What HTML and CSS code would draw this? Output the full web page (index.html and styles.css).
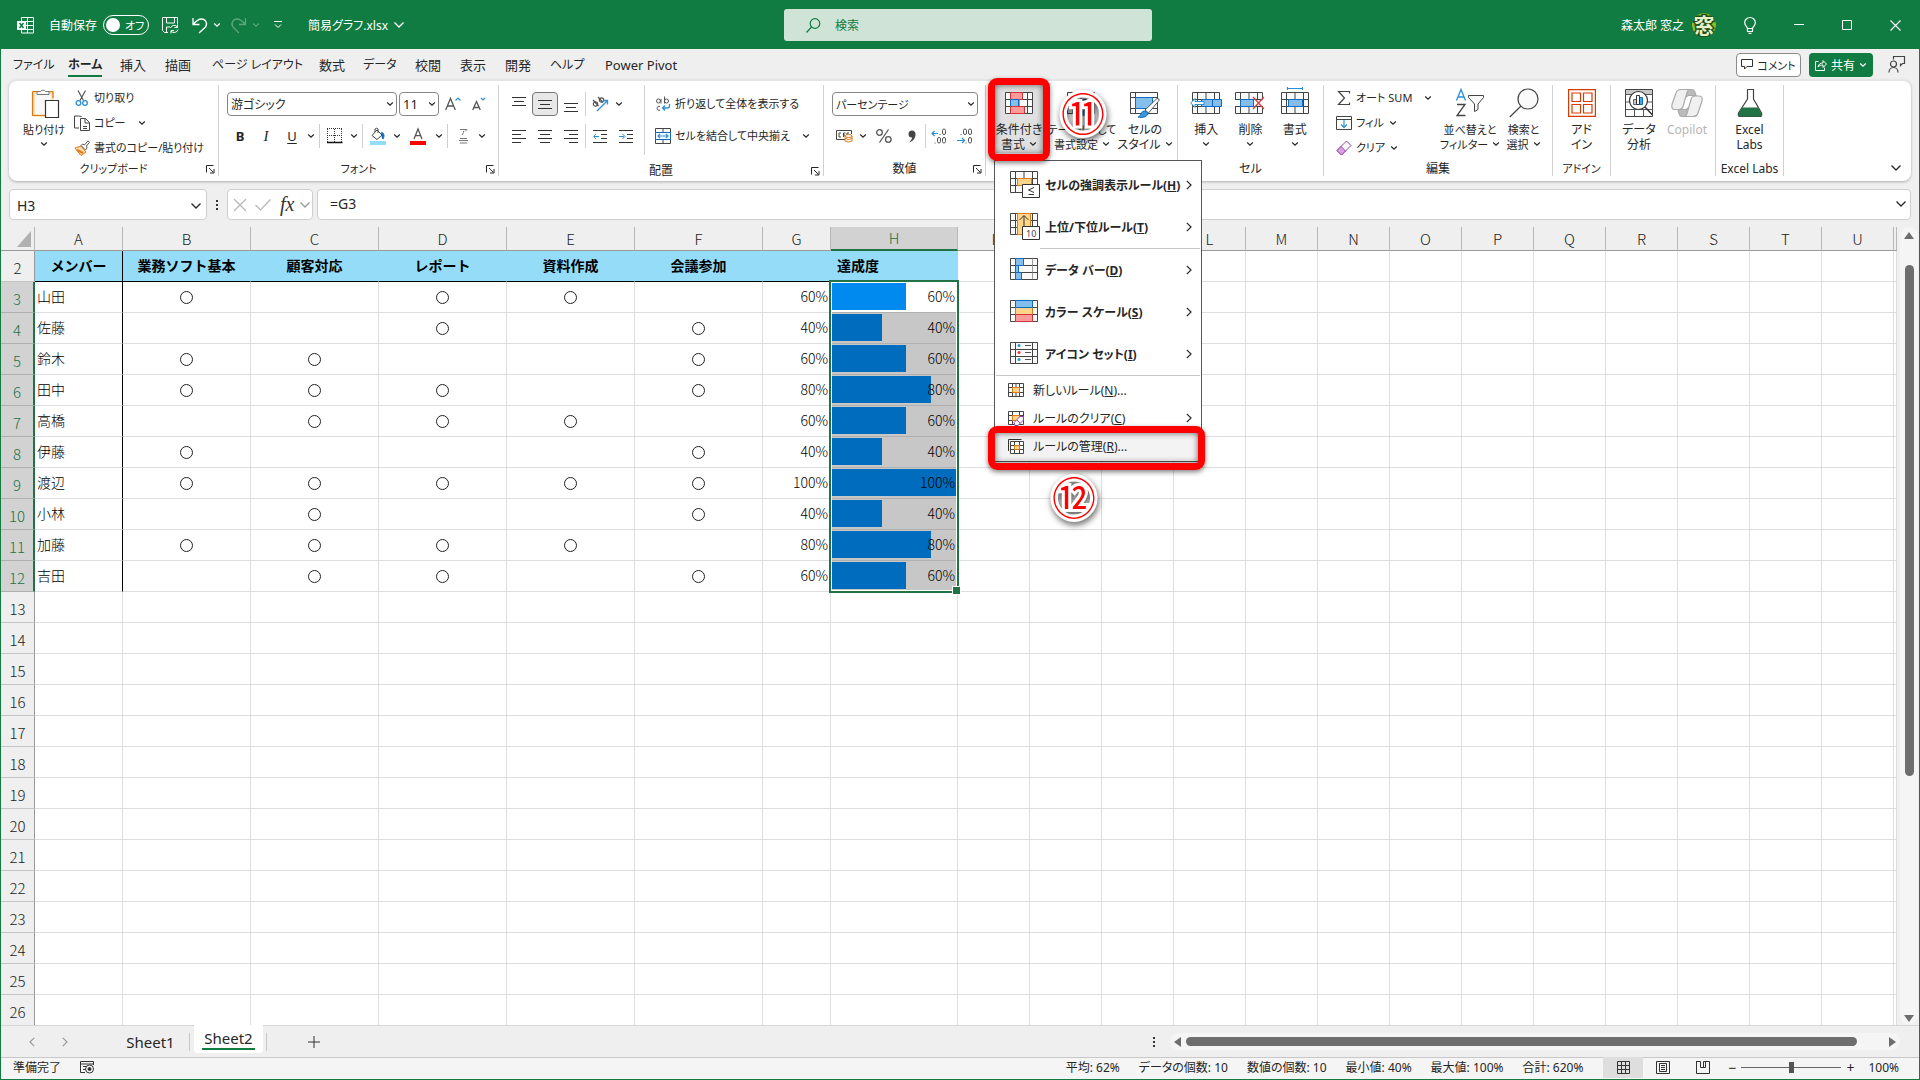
FILE: index.html
```html
<!DOCTYPE html>
<html lang="ja">
<head>
<meta charset="utf-8">
<title>簡易グラフ.xlsx - Excel</title>
<link rel="stylesheet" href="styles.css">
</head>
<body>
<svg class="defs" aria-hidden="true">
  <symbol id="chev" viewBox="0 0 8 6"><path d="M1.2 1.5 4 4.2 6.8 1.5" fill="none" stroke="currentColor" stroke-width="1.2"/></symbol>
  <symbol id="chev-l" viewBox="0 0 12 8"><path d="M1.5 1.5 6 6l4.500-4.500" fill="none" stroke="currentColor" stroke-width="1.300"/></symbol>
  <symbol id="next" viewBox="0 0 6 10"><path d="M.8.8 5 5 .8 9.200" fill="none" stroke="currentColor" stroke-width="1.200"/></symbol>
  <symbol id="launch" viewBox="0 0 9 9"><path d="M.5 7.500v-7h7M3 3l4.500 4.500M8 4v4H4" fill="none" stroke="currentColor"/></symbol>
  <symbol id="grid" viewBox="0 0 28 22"><path d="M.5.5h27v21H.5zM5.500.5v21M22.500.5v21M.5 7.500h27M.5 14.500h27M14 .5v21" fill="#fafafa" stroke="#444"/></symbol>
</svg>

<div class="app">
  <header class="title">
    <div class="title-left">
      <svg class="logo" viewBox="0 0 17 17"><path d="M4.500.5h12v15.500h-12zM4.500 4.500h12M4.500 8.500h12M4.500 12.500h12M10.500.5V16" fill="none" stroke="#fff"/><path d="M0 4h9v9H0z" fill="#fff"/><path d="M2.500 6l4 5M6.500 6l-4 5" stroke="#107c41" stroke-width="1.500"/></svg>
      <label class="autosave"><span>自動保存</span><input type="checkbox" class="toggle-input"><span class="toggle"><i class="knob"></i>オフ</span></label>
      <button class="tb save" aria-label="保存"><svg width="17" height="17" viewBox="0 0 17 17" fill="none" stroke="#fff"><path d="M6 15.500H2.500L.5 13.500V.5h15V7M4.500.5V6h8V.5M4.500 15v-5H8"/><path d="M8.500 11a4 4 0 0 1 7-1M15.500 7.500V10.500h-3M16 12.500a4 4 0 0 1-7 1.500M9 16.500v-3h3"/></svg></button>
      <button class="tb undo" aria-label="元に戻す"><svg width="16" height="17" viewBox="0 0 16 17" fill="none" stroke="#fff" stroke-width="1.300"><path d="M1 1v6.500h6.500M1 7.500C4 4 6 2 9.500 2a5 5 0 0 1 4 8L7 16"/></svg><svg class="chev"><use href="#chev"/></svg></button>
      <button class="tb redo" aria-label="やり直し"><svg width="16" height="17" viewBox="0 0 16 17" fill="none" stroke="currentColor" stroke-width="1.300"><path d="M14.500 1v6.500H8M14.500 7.500C11.500 4 9.500 2 6 2a5 5 0 0 0-4 8l6 6"/></svg><svg class="chev"><use href="#chev"/></svg></button>
      <button class="tb qat" aria-label="カスタマイズ"><svg width="8" height="8" viewBox="0 0 8 8" fill="none" stroke="#fff"><path d="M0 .5h8M1 3.500l3 3 3-3"/></svg></button>
      <button class="tb fname">簡易グラフ.xlsx<svg class="chev-l"><use href="#chev-l"/></svg></button>
    </div>
    <label class="search"><svg width="15" height="15" viewBox="0 0 15 15" fill="none" stroke="#107c41" stroke-width="1.200"><circle cx="9" cy="5.500" r="4.800"/><path d="M5.500 9 .5 14.500"/></svg><input type="search" placeholder="検索" aria-label="検索"></label>
    <div class="title-right">
      <span>森太郎 窓之</span>
      <svg class="avatar" viewBox="0 0 24 24"><circle cx="12" cy="12" r="12" fill="#8fbf21"/><path d="M2 19a12 12 0 0 0 20 0l-3-3H5z" fill="#1f4d1a"/><text x="12" y="20" text-anchor="middle" class="seal">窓</text></svg>
      <button class="tb bulb" aria-label="ヒント"><svg width="12" height="17" viewBox="0 0 12 17" fill="none" stroke="#fff" stroke-width="1.200"><path d="M3.500 11.500C3 9.500.7 8.500.7 5.500a5.300 5 0 0 1 10.600 0c0 3-2.300 4-2.800 6zM3.500 11.500v3h5v-3M4.500 16.300h3"/></svg></button>
      <button class="win" aria-label="最小化"><svg width="10" height="10"><path d="M0 4.500h10" stroke="#fff"/></svg></button>
      <button class="win" aria-label="最大化"><svg width="10" height="10"><path d="M.5.5h9v9h-9z" fill="none" stroke="#fff"/></svg></button>
      <button class="win" aria-label="閉じる"><svg width="11" height="11"><path d="M.5.5l10 10M10.500.5l-10 10" stroke="#fff" stroke-width="1.200"/></svg></button>
    </div>
  </header>

  <nav class="tabs">
    <div class="tab-list">
      <button class="kana">ファイル</button><button class="kana on">ホーム</button><button>挿入</button><button>描画</button><button class="kana">ページ レイアウト</button><button>数式</button><button class="kana">データ</button><button>校閲</button><button>表示</button><button>開発</button><button class="kana">ヘルプ</button><button>Power Pivot</button>
    </div>
    <button class="pill comment"><svg width="12" height="11" viewBox="0 0 12 11"><path d="M.5.5h11v7H6l-2.500 2.500V7.500h-3z" fill="none" stroke="#333"/></svg>コメント</button>
    <button class="pill share"><svg width="12" height="12" viewBox="0 0 12 12"><path d="M3.500 2.500h-3v9h9v-3M3 8c.5-3 2.500-4 5-4V1.500L11.500 5 8 8.500V6C6 6 4.500 6.500 3 8z" fill="none" stroke="#fff"/></svg>共有<svg class="chev"><use href="#chev"/></svg></button>
    <button class="pill person" aria-label="キャッチアップ"><svg width="17" height="17" viewBox="0 0 17 17"><path d="M5.500 3.500v-3h11v7h-2l-2 2v-2M1 16.500c0-3 2-5 4.500-5s4.500 2 4.500 5" fill="none" stroke="#444" stroke-width="1.200"/><circle cx="5.500" cy="8" r="3" fill="none" stroke="#444" stroke-width="1.200"/></svg></button>
  </nav>

  <section class="ribbon">
    <div class="group g-clip">
      <div class="body">
        <button class="big paste"><svg width="28" height="30" viewBox="0 0 28 30"><path d="M1.500 4.500h19v23h-19z" fill="#f8f8f8" stroke="#fbd78a" stroke-width="2"/><path d="M.5 3.500h20.500V10M.5 3.500v24H13" fill="none" stroke="#e07a14" stroke-width="1.200"/><path d="M5 6.500v-3h3.500a3 3 0 0 1 5 0H17v3z" fill="#fff" stroke="#777"/><path d="M13.500 12.500h13v17h-13z" fill="#fff" stroke="#333" stroke-width="1.200"/></svg><span>貼り付け</span><svg class="chev"><use href="#chev"/></svg></button>
        <div class="stack">
          <button class="small"><svg class="ic" viewBox="0 0 16 16" fill="none"><path d="M4 .5l5.500 10M11.500.5 6 10.500" stroke="#555" stroke-width="1.200"/><circle cx="4.500" cy="13" r="2.300" stroke="#2b8fd6" stroke-width="1.300"/><circle cx="11" cy="13" r="2.300" stroke="#2b8fd6" stroke-width="1.300"/></svg>切り取り</button>
          <button class="small"><svg class="ic" viewBox="0 0 16 16"><path d="M5 13H.5V1h4l3 .5M6.500 3.500h5l4 4v8h-9zM11 3.500V8h4.500M9 11.500h4M9 13.500h4" fill="none" stroke="#444"/></svg>コピー<svg class="chev far"><use href="#chev"/></svg></button>
          <button class="small"><svg class="ic" viewBox="0 0 16 16"><path d="M1 8l6-2 5 6-5 3.500z" fill="#fbdcae" stroke="#e07a14"/><path d="M3 10l6 3" stroke="#e07a14" stroke-width="2"/><path d="M7 5.500 8.500 4 10.500 5 14 .8l1.500 1.500L12.500 6l.5 2-1.500 2z" fill="#fff" stroke="#555"/></svg>書式のコピー/貼り付け</button>
        </div>
      </div>
      <div class="foot kana">クリップボード<button class="launch" aria-label="詳細"><svg width="9" height="9"><use href="#launch"/></svg></button></div>
    </div>

    <div class="group g-font">
      <div class="rows">
        <div class="row">
          <label class="combo font-name"><select aria-label="フォント"><option>游ゴシック</option></select><svg class="chev"><use href="#chev"/></svg></label>
          <label class="combo font-size"><select aria-label="サイズ"><option>11</option></select><svg class="chev"><use href="#chev"/></svg></label>
          <button class="ib w26" aria-label="拡大"><svg width="16" height="14" viewBox="0 0 16 14" fill="none"><path d="M.7 13 5.500 1.500 10.300 13M2.300 9h6.500" stroke="#555" stroke-width="1.300"/><path d="M10.500 3.500 13 1l2.500 2.500" stroke="#2b8fd6" stroke-width="1.200"/></svg></button>
          <button class="ib w26" aria-label="縮小"><svg width="14" height="14" viewBox="0 0 14 14" fill="none"><path d="M.7 13 4.500 4.500 8.300 13M2 10.500h5" stroke="#555" stroke-width="1.300"/><path d="M9 1l2 2 2-2" stroke="#2b8fd6" stroke-width="1.200"/></svg></button>
        </div>
        <div class="row">
          <button class="ib w26 bold">B</button><button class="ib w26 ital">I</button><button class="ib w26 undl">U</button><button class="ib w12" aria-label="下線の種類"><svg class="chev"><use href="#chev"/></svg></button><i class="vs"></i>
          <button class="ib w26" aria-label="罫線"><svg width="16" height="16"><path d="M.5 1v13M7.500 1v13M14.500 1v13M0 .5h16M0 7.500h16" stroke="#333" stroke-dasharray="1 1"/><path d="M0 14.500h15.500" stroke="#111" stroke-width="1.500"/></svg></button><button class="ib w12" aria-label="罫線の種類"><svg class="chev"><use href="#chev"/></svg></button><i class="vs"></i>
          <button class="ib w26" aria-label="塗りつぶし"><svg width="16" height="17" viewBox="0 0 16 17"><path d="M2 7.500 7 2l5 5-5 4.500zM5 4V1q1.500-1.500 3 0v4" fill="#fff" stroke="#444"/><path d="M11.500 4.500c3 .5 3 4 1.500 6.500-1-1.500-1-3-1.500-6.500z" fill="#0f6cbd" stroke="#0f6cbd"/><path d="M0 13h16v4H0z" fill="#93ddf8"/></svg></button><button class="ib w12" aria-label="塗りつぶしの色"><svg class="chev"><use href="#chev"/></svg></button>
          <button class="ib w30" aria-label="フォントの色"><svg width="16" height="17" viewBox="0 0 16 17"><path d="M4 11 8 1l4 10M5.300 7.700h5.400" fill="none" stroke="#555" stroke-width="1.300"/><path d="M0 13h16v4H0z" fill="red"/></svg></button><button class="ib w12" aria-label="色の選択"><svg class="chev"><use href="#chev"/></svg></button><i class="vs"></i>
          <button class="ib w26" aria-label="ふりがな"><svg width="9" height="16" viewBox="0 0 9 16" fill="none" stroke="#777"><path d="M1 1.500h7L6 3.500M4.500 3v1.500L3 7M1 10.500h7M0 12.500h9M1 15h7"/></svg></button><button class="ib w12" aria-label="ふりがなの設定"><svg class="chev"><use href="#chev"/></svg></button>
        </div>
      </div>
      <div class="foot kana">フォント<button class="launch" aria-label="詳細"><svg width="9" height="9"><use href="#launch"/></svg></button></div>
    </div>

    <div class="group g-align">
      <div class="split">
        <div class="rows">
          <div class="row">
            <button class="ib w26" aria-label="上揃え"><svg class="al"><path d="M0 1.500h14M2 5.500h10M0 9.500h14"/></svg></button><button class="ib w26 sel" aria-label="上下中央"><svg class="al"><path d="M0 4.500h14M2 8.500h10M0 12.500h14"/></svg></button><button class="ib w26" aria-label="下揃え"><svg class="al"><path d="M0 7.500h14M2 11.500h10M0 15.500h14"/></svg></button><i class="vs"></i>
            <button class="ib w26" aria-label="方向"><svg width="17" height="16" viewBox="0 0 17 16"><g fill="none"><circle cx="3.500" cy="8" r="2.200" stroke="#555" stroke-width="1.200"/><path d="M1 4l5.500 6M6 1l5 5.500" stroke="#555" stroke-width="1.200"/><circle cx="9.500" cy="4" r="2.200" stroke="#555" stroke-width="1.200"/><path d="M5 15 15.500 4.500M11.500 4.500h4v4" stroke="#2b8fd6" stroke-width="1.300"/></g></svg></button><button class="ib w12" aria-label="方向の選択"><svg class="chev"><use href="#chev"/></svg></button>
          </div>
          <div class="row">
            <button class="ib w26" aria-label="左揃え"><svg class="al"><path d="M0 2.500h14M0 6.500h9M0 10.500h14M0 14.500h9"/></svg></button><button class="ib w26" aria-label="中央揃え"><svg class="al"><path d="M0 2.500h14M2 6.500h10M0 10.500h14M2 14.500h10"/></svg></button><button class="ib w26" aria-label="右揃え"><svg class="al"><path d="M0 2.500h14M5 6.500h9M0 10.500h14M5 14.500h9"/></svg></button><i class="vs"></i>
            <button class="ib w26" aria-label="インデントを減らす"><svg class="al"><path d="M0 2.500h14M8 6.500h6M8 10.500h6M0 14.500h14"/><path class="bl" d="M6 8.500H1M3 6 .7 8.500 3 11"/></svg></button><button class="ib w26" aria-label="インデントを増やす"><svg class="al"><path d="M0 2.500h14M8 6.500h6M8 10.500h6M0 14.500h14"/><path class="bl" d="M0 8.500h5M3.500 6 6 8.500 3.500 11"/></svg></button>
          </div>
        </div>
        <div class="rows wrapcol">
          <button class="small"><svg class="ic" viewBox="0 0 16 16" fill="none" stroke="#555"><circle cx="3.500" cy="5" r="2"/><path d="M6 3v4.500M9.500.5v7"/><circle cx="11.500" cy="5" r="2"/><path d="M5 10.500a2 2 0 1 0 0 3.500"/><path d="M14.500 8v2q0 2-2.500 2H7.500M10 9.500 7.500 12l2.500 2.500" stroke="#2b8fd6" stroke-width="1.300"/></svg>折り返して全体を表示する</button>
          <button class="small"><svg class="ic" viewBox="0 0 16 16" fill="none"><path d="M.5.5h15v15H.5zM8 .5v4M8 12v3.500" stroke="#444"/><path d="M.5 4.500h15v7H.5z" fill="#fff" stroke="#0f6cbd"/><path d="M3 8h10M5 6 3 8l2 2M11 6l2 2-2 2" stroke="#2b8fd6" stroke-width="1.200"/></svg>セルを結合して中央揃え<svg class="chev far"><use href="#chev"/></svg></button>
        </div>
      </div>
      <div class="foot">配置<button class="launch" aria-label="詳細"><svg width="9" height="9"><use href="#launch"/></svg></button></div>
    </div>

    <div class="group g-num">
      <div class="rows">
        <div class="row"><label class="combo num-fmt"><select aria-label="表示形式" class="kana"><option>パーセンテージ</option></select><svg class="chev"><use href="#chev"/></svg></label></div>
        <div class="row">
          <button class="ib w26" aria-label="通貨"><svg width="17" height="14" viewBox="0 0 17 14"><path d="M9 10.500H.5V1.500h15V5M5 4H3v4h2M7.500 8V4h2M7.500 6H9M13 4h-2v2" fill="none" stroke="#444"/><path d="M9 7v5q3.500 2 7 0V7z" fill="#fff" stroke="#e07a14"/><ellipse cx="12.500" cy="7" rx="3.500" ry="1.500" fill="#fff" stroke="#e07a14"/><path d="M9 9.500q3.500 2 7 0" fill="none" stroke="#e07a14"/></svg></button><button class="ib w12" aria-label="通貨の種類"><svg class="chev"><use href="#chev"/></svg></button>
          <button class="ib w30" aria-label="パーセント"><svg width="16" height="14" viewBox="0 0 16 14" fill="none" stroke="#555" stroke-width="1.300"><circle cx="3.500" cy="3.500" r="2.800"/><circle cx="12.300" cy="10.500" r="2.800"/><path d="M12.500.5 3.500 13.500"/></svg></button><button class="ib w26" aria-label="桁区切り"><svg width="8" height="13" viewBox="0 0 8 13"><path d="M4 .5a3.500 3.500 0 0 1 3.500 4C7.500 8 5 11.500 1 12.500c2-2 3-3.500 3-5A3.500 3.500 0 1 1 4 .5z" fill="#444"/></svg></button><i class="vs"></i>
          <button class="ib w26" aria-label="小数点以下を増やす"><svg width="16" height="16" viewBox="0 0 16 16" fill="none" stroke="#555"><path d="M7 5.500H1M3.500 3 1 5.500 3.500 8" stroke="#2b8fd6" stroke-width="1.200"/><rect x="11.500" y="1" width="3" height="5.500" rx="1.500"/><rect x="6.500" y="9.500" width="3" height="5.500" rx="1.500"/><rect x="11.500" y="9.500" width="3" height="5.500" rx="1.500"/><path d="M8.500 6.500h1M3.500 15h1"/></svg></button><button class="ib w26" aria-label="小数点以下を減らす"><svg width="16" height="16" viewBox="0 0 16 16" fill="none" stroke="#555"><path d="M0 12.500h7M5 10l2.500 2.500L5 15" stroke="#2b8fd6" stroke-width="1.200"/><rect x="6.500" y="1" width="3" height="5.500" rx="1.500"/><rect x="11.500" y="1" width="3" height="5.500" rx="1.500"/><rect x="11.500" y="9.500" width="3" height="5.500" rx="1.500"/><path d="M3.500 6.500h1M8.500 15h1"/></svg></button>
        </div>
      </div>
      <div class="foot">数値<button class="launch" aria-label="詳細"><svg width="9" height="9"><use href="#launch"/></svg></button></div>
    </div>

    <div class="group g-style">
      <div class="body">
        <button class="big pressed"><svg width="28" height="30" viewBox="0 0 28 30"><svg y="4" width="28" height="22"><use href="#grid"/></svg><path d="M5.500 4.500h12v7h-12z" fill="#ff9a9a" stroke="#d13438"/><path d="M5.500 11.500h8v7h-8z" fill="#83beec" stroke="#0f6cbd"/><path d="M5.500 18.500h14v7h-14z" fill="#ff9a9a" stroke="#d13438"/></svg><span>条件付き<br>書式<svg class="chev"><use href="#chev"/></svg></span>
          <i class="mark mark-btn"></i></button>
        <button class="big"><svg width="30" height="30" viewBox="0 0 30 30"><svg y="4" width="28" height="22"><use href="#grid"/></svg><path d="M6 12h16v13H6z" fill="#83beec" stroke="#0f6cbd"/><path d="M12 27c0-4 2-6 5-6l3 3c0 3-4 4-8 3z" fill="#2b8fd6" stroke="#0f6cbd"/></svg><span>テーブルとして<br>書式設定<svg class="chev"><use href="#chev"/></svg></span></button>
        <button class="big"><svg width="30" height="30" viewBox="0 0 30 30"><path d="M.5 4.500h27v21H.5zM5.500 4.500v21M.5 9.500h27M.5 20.500h27" fill="#fafafa" stroke="#444"/><path d="M5.500 9.500h17v11h-17z" fill="#83beec" stroke="#0f6cbd"/><path d="M15 22 27 10.500q3 0 2 2L18.500 25z" fill="#fff" stroke="#555"/><path d="M8 29c3 0 2-5 6-6 3 0 4 2 4 3-1 3-6 4-10 3z" fill="#3a96dd" stroke="#0f6cbd"/></svg><span>セルの<br>スタイル<svg class="chev"><use href="#chev"/></svg></span></button>
      </div>
      <span class="badge badge-11">⑪</span>
      <div class="menu" role="menu">
        <button class="mi lg"><svg width="30" height="28" viewBox="0 0 30 28"><use href="#grid" width="28" height="22"/><path d="M7.500 7.500h14v7h-14z" fill="#ffd58a" stroke="#e07a14"/><path d="M12.500 13.500h17v13h-17z" fill="#fff" stroke="#333"/><path d="M24 16.500 18.500 19l5.500 2.500M18.500 23.500H24" fill="none" stroke="#333"/></svg><b>セルの強調表示ルール(<u>H</u>)</b><svg class="next"><use href="#next"/></svg></button>
        <button class="mi lg"><svg width="30" height="28" viewBox="0 0 30 28"><use href="#grid" width="28" height="22"/><path d="M7.500.5h13v21h-13z" fill="#ffd58a" stroke="#e07a14"/><path d="M14 15V3M9.500 7 14 2.500 18.500 7" fill="none" stroke="#333"/><path d="M12.500 13.500h17v13h-17z" fill="#fff" stroke="#333"/><text x="16" y="24" class="tiny">10</text></svg><b>上位/下位ルール(<u>T</u>)</b><svg class="next"><use href="#next"/></svg></button>
        <i class="hr inset"></i>
        <button class="mi lg"><svg width="30" height="28" viewBox="0 0 30 28"><svg y="2" width="28" height="22"><use href="#grid"/></svg><path d="M5.500 2.500h17v21h-17z" fill="#fafafa"/><path d="M5.500 9.500h17M5.500 16.500h17M5.500 2.500h17M5.500 23.500h17" stroke="#444"/><path d="M5.500 2.500h8v7h-8zM5.500 9.500h3v7h-3zM5.500 16.500h6v7h-6z" fill="#83beec" stroke="#0f6cbd"/></svg><b>データ バー(<u>D</u>)</b><svg class="next"><use href="#next"/></svg></button>
        <button class="mi lg"><svg width="30" height="28" viewBox="0 0 30 28"><svg y="2" width="28" height="22"><use href="#grid"/></svg><path d="M5.500 9.500h17v7h-17z" fill="#ffd58a" stroke="#e07a14"/><path d="M5.500 2.500h17v7h-17z" fill="#83beec" stroke="#0f6cbd"/><path d="M5.500 16.500h17v7h-17z" fill="#ff9a9a" stroke="#d13438"/></svg><b>カラー スケール(<u>S</u>)</b><svg class="next"><use href="#next"/></svg></button>
        <button class="mi lg"><svg width="30" height="28" viewBox="0 0 30 28"><svg y="2" width="28" height="22"><use href="#grid"/></svg><path d="M6 3h16v6H6zM6 10h16v6H6zM6 17h16v6H6z" fill="#fafafa"/><path d="M15 5.500h6M15 12.500h6M15 19.500h6" stroke="#555"/><circle cx="9" cy="5.500" r="1.500" fill="#2b8fd6"/><circle cx="9" cy="12.500" r="1.500" fill="#e8383d"/><circle cx="9" cy="19.500" r="1.500" fill="#2b8fd6"/></svg><b>アイコン セット(<u>I</u>)</b><svg class="next"><use href="#next"/></svg></button>
        <i class="hr"></i>
        <button class="mi"><svg width="16" height="14" viewBox="0 0 16 14"><path d="M.5.5h15v13H.5zM4.500.5v13M11.500.5v13M.5 4.500h15M.5 9.500h15M8 .5v13" fill="#fff" stroke="#444"/><path d="M4.500 4.500h7v5h-7z" fill="#ffd58a" stroke="#e07a14"/></svg><span>新しいルール(<u>N</u>)...</span></button>
        <button class="mi"><svg width="16" height="15" viewBox="0 0 16 15"><path d="M.5.5h15v13H.5zM4.500.5v13M11.500.5v13M.5 4.500h15M.5 9.500h15" fill="#fff" stroke="#444"/><path d="M4.500 4.500h7v5h-7z" fill="#ffd58a" stroke="#e07a14"/><path d="M6 11.500l6-6h3.500V9l-5.500 5.500H7z" fill="#fff" stroke="#9b3fa8"/><path d="M9 9l3 3" stroke="#9b3fa8"/></svg><span>ルールのクリア(<u>C</u>)</span><svg class="next"><use href="#next"/></svg></button>
        <button class="mi hov"><svg width="16" height="15" viewBox="0 0 16 15"><path d="M.5 12V.5h13" fill="none" stroke="#333"/><path d="M2.500 2.500h13v12h-13zM6.500 2.500v12M11.500 2.500v12M2.500 6.500h13M2.500 10.500h13" fill="#fff" stroke="#444"/><path d="M6.500 6.500h5v4h-5z" fill="#ffd58a" stroke="#e07a14"/></svg><span>ルールの管理(<u>R</u>)...</span><i class="mark mark-item"></i></button>
      </div>
      <span class="badge badge-12">⑫</span>
    </div>

    <div class="group g-cells">
      <div class="body">
        <button class="big"><svg width="32" height="30" viewBox="0 0 32 30"><svg x="2" y="4" width="28" height="22"><use href="#grid"/></svg><path d="M11.500 11.500h20v7h-20zM22.500 11.500v7" fill="#83beec" stroke="#0f6cbd"/><path d="M14 13.500H5v-3L.7 15 5 19.500v-3h9z" fill="#fff" stroke="#2b8fd6"/></svg><span>挿入</span><svg class="chev"><use href="#chev"/></svg></button>
        <button class="big"><svg width="30" height="30" viewBox="0 0 30 30"><svg y="4" width="28" height="22"><use href="#grid"/></svg><path d="M0 12h28v6H0z" fill="#fff"/><path d="M5.500 11.500h13v7h-13z" fill="#83beec" stroke="#0f6cbd"/><path d="M18 9l11 12M29 9 18 21" stroke="#e8383d" stroke-width="1.300"/></svg><span>削除</span><svg class="chev"><use href="#chev"/></svg></button>
        <button class="big"><svg width="28" height="30" viewBox="0 0 28 30"><svg y="4" width="28" height="22"><use href="#grid"/></svg><path d="M7.500 11.500h14v7h-14z" fill="#83beec" stroke="#0f6cbd"/><path d="M6.500.5h15M6.500-1v3M21.500-1v3" stroke="#2b8fd6" stroke-width="1.200"/></svg><span>書式</span><svg class="chev"><use href="#chev"/></svg></button>
      </div>
      <div class="foot">セル</div>
    </div>

    <div class="group g-edit">
      <div class="body">
        <div class="stack">
          <button class="small"><svg class="ic" viewBox="0 0 16 16"><path d="M13.500 3.500v-2H2.500L8.500 8l-6 6.500h11v-2" fill="none" stroke="#444" stroke-width="1.200"/></svg>オート SUM<svg class="chev far"><use href="#chev"/></svg></button>
          <button class="small"><svg class="ic" viewBox="0 0 16 16" fill="none"><path d="M.5 1.500h15v13H.5zM.5 4.500h15" stroke="#444"/><path d="M8 5v7M5 9.500 8 12.500l3-3" stroke="#2b8fd6" stroke-width="1.200"/></svg>フィル<svg class="chev"><use href="#chev"/></svg></button>
          <button class="small"><svg class="ic" viewBox="0 0 16 16"><path d="M1 10.500 10.500 1 15 5.500 5.500 15z" fill="#fff" stroke="#9b3fa8"/><path d="M1 10.500 5 6.500l4.500 4.500-4 4z" fill="#d9a3e0" stroke="#9b3fa8"/></svg>クリア<svg class="chev"><use href="#chev"/></svg></button>
        </div>
        <button class="big sort"><svg width="30" height="30" viewBox="0 0 30 30" fill="none"><path d="M1.500 12.500 6 1.500l4.500 11M3 9h6" stroke="#2b8fd6" stroke-width="1.300"/><path d="M2 16.500h8L2 27.500h8.500" stroke="#444" stroke-width="1.300"/><path d="M13.500 7.500h15v2L23 16v5.500l-3.500 2V16l-6-6.500z" stroke="#444" fill="#fafafa"/></svg><span>並べ替えと<br>フィルター<svg class="chev"><use href="#chev"/></svg></span></button>
        <button class="big find"><svg width="30" height="30" viewBox="0 0 30 30" fill="none" stroke="#444" stroke-width="1.200"><circle cx="19" cy="11" r="10" fill="#fafafa"/><path d="M12 18 .8 29"/></svg><span>検索と<br>選択<svg class="chev"><use href="#chev"/></svg></span></button>
      </div>
      <div class="foot">編集</div>
    </div>

    <div class="group g-add">
      <div class="body"><button class="big"><svg width="28" height="30" viewBox="0 0 28 30" fill="none" stroke="#d83b01" stroke-width="1.200"><path d="M.6 1.600h26.800v26.800H.6zM4 5h8.500v8.500H4zM15.500 5H24v8.500h-8.500zM4 16.500h8.500V25H4zM15.500 16.500H24V25h-8.500z"/></svg><span>アド<br>イン</span></button></div>
      <div class="foot kana">アドイン</div>
    </div>

    <div class="group g-ana">
      <div class="body">
        <button class="big"><svg width="28" height="30" viewBox="0 0 28 30"><path d="M.5 1.500h27v27H.5z" fill="#fff" stroke="#444"/><path d="M1 2h26v4H1z" fill="#c8c8c8"/><path d="M.5 6.500h27M.5 14h6M21 14h7M.5 21.500h27M9.500 21v7M18.500 21v7M5 6v0" stroke="#555"/><circle cx="13.500" cy="12.500" r="9" fill="#fff" stroke="#333" stroke-width="1.200"/><path d="M20 19l7.500 8" stroke="#333" stroke-width="1.500"/><path d="M8.500 11.500h3v5h-3z" fill="#c8c8c8" stroke="#666"/><path d="M14.500 9.500h3v7h-3z" fill="#4ea3e0" stroke="#0f6cbd"/><path d="M11.500 7.500h3v9h-3z" fill="#fff" stroke="#333"/></svg><span>データ<br>分析</span></button>
        <button class="big dis"><svg width="32" height="30" viewBox="0 0 32 30" stroke="#aaa" stroke-width="1.200"><path d="M16 1.500h5q2 0 3 3l1 3h-8l-4 3z" fill="#bbb"/><path d="M16 28.500h-5q-2 0-3-3l-1-4h8l4-3z" fill="#bbb"/><path d="M10 1.500h9q-2 0-3 3l-4 14q-1 3-4 3H4q-4 0-3-5L5 5q1-3.500 5-3.500z" fill="#f0f0f0"/><path d="M22 28.500h-9q2 0 3-3l4-14q1-3.500 4-3.500h4q4 0 3 5l-4 12q-1 3.500-5 3.500z" fill="#f0f0f0"/></svg><span>Copilot</span></button>
      </div>
      <div class="foot"></div>
    </div>

    <div class="group g-labs">
      <div class="body"><button class="big"><svg width="26" height="30" viewBox="0 0 26 30"><path d="M10 1.500h7M10.500 2v9L1.500 25q-1 3.500 2 3.500h19q3 0 2-3.500L16.500 11V2" fill="#fff" stroke="#444" stroke-width="1.200"/><path d="M5 19.500h16l3.500 6q.5 3-2 3h-19q-3 0-2-3z" fill="#217346"/></svg><span>Excel<br>Labs</span></button></div>
      <div class="foot">Excel Labs</div>
    </div>
    <button class="collapse" aria-label="リボンを折りたたむ"><svg class="chev-l"><use href="#chev-l"/></svg></button>
  </section>

  <section class="fbar">
    <label class="box namebox"><input value="H3" aria-label="名前ボックス"><svg class="chev-l"><use href="#chev-l"/></svg></label>
    <i class="dots"></i>
    <div class="box fx"><svg width="12" height="12" viewBox="0 0 12 12"><path d="M0 0l12 12M12 0 0 12" stroke="#b5b5b5" stroke-width="1.200"/></svg><svg width="16" height="12" viewBox="0 0 16 12"><path d="M.5 6l5 5L15.500.5" fill="none" stroke="#b5b5b5" stroke-width="1.200"/></svg><button aria-label="関数の挿入"><em>fx</em></button><svg class="chev-l dim"><use href="#chev-l"/></svg></div>
    <label class="box formula"><input value="=G3" aria-label="数式バー"><svg class="chev-l"><use href="#chev-l"/></svg></label>
  </section>

  <main class="work">
    <div class="sheet"><table class="grid" id="grid-table"></table></div>
    <div class="vscroll"><i class="up"></i><i class="thumb"></i><i class="down"></i></div>
  </main>

  <nav class="sheets">
    <button class="nav" aria-label="前のシート"><svg class="next flip"><use href="#next"/></svg></button><button class="nav" aria-label="次のシート"><svg class="next"><use href="#next"/></svg></button>
    <button class="st">Sheet1</button><button class="st cur"><span>Sheet2</span></button>
    <button class="plus" aria-label="新しいシート"><svg width="12" height="12"><path d="M6 0v12M0 6h12" stroke="#333"/></svg></button>
    <i class="dots"></i>
    <div class="hscroll"><i class="left"></i><i class="hthumb"></i><i class="right"></i></div>
  </nav>

  <footer class="status">
    <span>準備完了</span>
    <svg class="macro" width="15" height="13" viewBox="0 0 15 13" fill="none" stroke="#333"><path d="M5 11.500H.5V.5h13V4M.5 3h13M3 5.500h3M3 8.500h2"/><circle cx="9.500" cy="8" r="4" fill="#f5f5f5"/><circle cx="9.500" cy="8" r="1.500" fill="#222"/></svg>
    <div class="stats"><span>平均: 62%</span><span>データの個数: 10</span><span>数値の個数: 10</span><span>最小値: 40%</span><span>最大値: 100%</span><span>合計: 620%</span></div>
    <button class="view on" aria-label="標準"><svg width="13" height="13"><path d="M.5.5h12v12H.5zM4.500.5v12M8.500.5v12M.5 4.500h12M.5 8.500h12" fill="none" stroke="#333"/></svg></button>
    <button class="view" aria-label="ページ レイアウト"><svg width="14" height="13"><path d="M.5.5h13v12H.5zM3.500 2.500h7v8h-7zM5 4.500h4M5 6.500h4M5 8.500h4" fill="none" stroke="#333"/></svg></button>
    <button class="view" aria-label="改ページ"><svg width="14" height="13"><path d="M.5 0v12.500h13V.5h-6v6M.5.5h4v6h5v-6" fill="none" stroke="#333"/></svg></button>
    <button class="zb" aria-label="縮小">−</button><input type="range" class="zoom" aria-label="ズーム" value="50"><button class="zb" aria-label="拡大">+</button><span class="pct">100%</span>
  </footer>
</div>
<script src="app.js"></script>
</body>
</html>
```
FILE: styles.css
```css
* { box-sizing: border-box; }
html, body { margin: 0; height: 100%; }
body {
  font-family: "Noto Sans", "Noto Sans CJK JP", sans-serif;
  font-size: 12px;
  color: #262626;
  overflow: hidden;
}
button, input, select { font: inherit; color: inherit; background: none; border: 0; padding: 0; margin: 0; outline: 0; }
button { white-space: nowrap; }
svg { display: block; flex: none; overflow: visible; }
i { font-style: normal; }
.defs { position: absolute; width: 0; height: 0; }
.chev { width: 8px; height: 6px; }
.chev-l { width: 12px; height: 8px; }
.next { width: 6px; height: 10px; }

.app {
  display: flex;
  flex-direction: column;
  height: 100vh;
  border: 1px solid #107c41;
  background: #efefef;
  font-feature-settings: "palt";
}

/* title bar */
.title {
  display: grid;
  grid-template-columns: 1fr 368px 1fr;
  align-items: center;
  height: 48px;
  padding-left: 16px;
  background: #107c41;
  color: #fff;
}
.title-left, .title-right { display: flex; align-items: center; }
.title-right { justify-content: flex-end; }
.logo { width: 17px; height: 17px; margin-right: 15px; }
.autosave { display: flex; align-items: center; gap: 6px; }
.toggle-input { position: absolute; opacity: 0; }
.toggle { display: flex; align-items: center; gap: 5px; width: 46px; height: 20px; padding-left: 2px; border: 1px solid #fff; border-radius: 10px; font-size: 11px; white-space: nowrap; }
.knob { flex: none; width: 14px; height: 14px; border-radius: 50%; background: #fff; }
.tb { display: flex; align-items: center; gap: 5px; }
.save { margin-left: 13px; }
.undo { margin-left: 13px; }
.redo { margin-left: 10px; color: #5ba67f; }
.qat { margin-left: 14px; }
.fname { margin-left: 26px; }
.search { display: flex; align-items: center; gap: 14px; height: 32px; padding-left: 22px; border-radius: 3px; background: #cfe3d7; color: #107c41; }
.search input { flex: 1; }
.search input::placeholder { color: #107c41; opacity: 1; }
.avatar { width: 24px; height: 24px; margin: 0 28px 0 8px; border-radius: 50%; overflow: hidden; }
.seal { font: 700 21px "Noto Sans CJK JP", sans-serif; fill: #e6efc6; stroke: #1f4d1a; stroke-width: 3px; paint-order: stroke fill; }
.bulb { margin-right: 19px; }
.win { display: flex; align-items: center; justify-content: center; width: 48px; height: 48px; }

/* tab strip */
.tabs { display: flex; align-items: center; height: 31px; padding: 0 14px 0 12px; }
.tab-list { display: grid; grid-template-columns: 55px 52px 45px 47px 107px 44px 52px 45px 45px 45px 55px 80px; flex: 1; align-self: stretch; font-size: 13px; }
.tab-list button { justify-self: start; height: 28px; line-height: 20px; padding-top: 6px; border-bottom: 2px solid transparent; }
.tab-list .kana { font-size: 12px; }
.tab-list .on { font-weight: 700; border-bottom-color: #107c41; }
.pill { display: flex; align-items: center; justify-content: center; gap: 4px; height: 24px; border-radius: 4px; }
.comment { width: 65px; border: 1px solid #8a8a8a; background: #fff; font-size: 11px; }
.share { width: 64px; margin-left: 8px; background: #107c41; color: #fff; }
.person { margin-left: 15px; width: 17px; }

/* ribbon */
.ribbon { display: flex; height: 101px; margin: 0 8px; padding: 4px 0; border: 1px solid #e4e4e4; border-width: 1px 0 0; border-radius: 8px; background: #fff; box-shadow: 0 1px 3px rgba(0, 0, 0, .28); }
.group { display: flex; flex-direction: column; height: 91px; border-right: 1px solid #d0d0d0; position: relative; }
.body { display: flex; height: 79px; }
.foot { line-height: 14px; height: 14px; text-align: center; position: relative; white-space: nowrap; }
.kana { font-size: 11px; }
.launch { position: absolute; right: 3px; top: 3px; }
.g-clip { width: 210px; }
.g-font { width: 280px; }
.g-align { width: 325px; }
.g-num { width: 162px; }
.g-style { width: 192px; }
.g-cells { width: 146px; }
.g-edit { width: 229px; }
.g-add { width: 58px; }
.g-ana { width: 105px; }
.g-labs { width: 68px; }
.big { display: flex; flex-direction: column; align-items: center; line-height: 15px; padding-top: 3px; flex: 1; position: relative; }
.big > span { margin-top: 4px; text-align: center; }
.big > span .chev { display: inline-block; margin: 0 0 2px 4px; }
.big > .chev { margin-top: 4px; }
.stack { display: grid; grid-template-rows: repeat(3, 25px); }
.small { display: flex; align-items: center; gap: 4px; font-size: 11px; line-height: 16px; }
.small .chev { margin-left: 1px; }
.small .far { margin-left: 8px; }
.ic { width: 16px; height: 16px; }
.g-clip .big { flex: none; width: 60px; margin-left: 5px; font-size: 11px; }
.g-clip .big > svg:first-child { margin-left: 4px; }
.rows { display: flex; flex-direction: column; gap: 8px; height: 79px; padding-top: 7px; }
.row { display: flex; align-items: center; height: 24px; }
.combo { position: relative; display: flex; align-items: center; height: 24px; border: 1px solid #868686; border-radius: 4px; background: #fff; }
.combo select { appearance: none; width: 100%; padding-left: 3px; }
.combo .chev { position: absolute; right: 2px; }
.combo .kana { font-size: 11px; }
.font-name { width: 170px; margin: 0 2px 0 8px; }
.font-size { width: 40px; margin-right: 1px; }
.font-size select { font-size: 13px; }
.num-fmt { width: 146px; margin-left: 8px; }
.ib { display: flex; align-items: center; justify-content: center; height: 24px; }
.w26 { width: 26px; }
.w30 { width: 30px; }
.w12 { width: 12px; }
.vs { width: 1px; height: 24px; margin: 0 2px; background: #d0d0d0; }
.g-font .row:nth-child(2) { padding-left: 8px; }
.g-num .row:nth-child(2) { padding-left: 7px; }
.g-num .vs { margin: 0; }
.g-align .vs { margin: 0 1px; }
.bold { font-weight: 700; font-size: 13px; }
.ital { font-style: italic; font-family: "Liberation Serif", serif; font-size: 15px; }
.undl { text-decoration: underline; text-underline-offset: 2px; font-size: 13px; }
.g-align .row { padding-left: 7px; }
.al { width: 14px; height: 17px; fill: none; stroke: #333; }
.bl { stroke: #2b8fd6; }
.sel { border: 1px solid #777; border-radius: 4px; background: #e8e8e8; }
.split { display: flex; }
.split .rows:first-child { width: 145px; }
.wrapcol { border-left: 1px solid #d0d0d0; padding-left: 10px; height: 70px; }
.wrapcol .small { height: 24px; }
.g-align .split { height: 79px; }

/* style group: button, highlight frames, drop-down */
.g-style .body { padding: 0 4px; }
.g-style .big { flex: none; width: 58px; }
.g-style .big:nth-child(2) { width: 68px; font-size: 11px; }
.g-cells .body { padding: 0 6px; }
.g-style .pressed { height: 68px; background: #e0e0e0; }
.mark { position: absolute; border: 7px solid #f00; border-radius: 9px; box-shadow: 0 2px 5px rgba(0, 0, 0, .5), inset 0 0 6px rgba(0, 0, 0, .6); z-index: 6; }
.mark-btn { inset: -7px -2px -8px -2px; }
.mark-item { inset: -6px -5px -10px -8px; }
.badge { position: absolute; z-index: 7; font: 400 44px/48px "Noto Sans CJK JP", sans-serif; color: #f00; -webkit-text-stroke: 6px #fff; paint-order: stroke fill; filter: drop-shadow(1px 3px 3px rgba(0, 0, 0, .6)); }
.badge-11 { left: 75px; top: 3px; }
.badge-12 { left: 66px; top: 387px; }
.menu { position: absolute; z-index: 5; left: 8px; top: 75px; width: 208px; padding: 3px 1px 1px; border: 1px solid #555; background: #fff; }
.mi { display: flex; align-items: center; width: 100%; height: 28px; padding: 0 8px 0 12px; gap: 9px; position: relative; }
.mi.lg { height: 42px; padding-left: 14px; gap: 5px; }
.mi .next { margin-left: auto; }
.hr { display: block; height: 1px; background: #c8c8c8; }
.hr.inset { margin-left: 44px; }
.hov { background: #f3f3f3; }
.tiny { font-size: 9px; fill: #444; }

.g-edit .stack { width: 115px; padding-left: 12px; }
.g-edit .big { font-size: 11px; }
.g-edit .sort { flex: none; width: 62px; }
.g-edit .find { flex: none; width: 45px; }
.g-ana .body { padding: 0 4px; }
.dis { color: #b5b5b5; }
.collapse { margin: auto 9px 5px auto; }

/* formula bar */
.fbar { display: flex; margin: 8px 8px 7px; height: 31px; font-size: 14px; }
.box { display: flex; align-items: center; border: 1px solid #cfcfcf; border-radius: 4px; background: #fff; }
.box input { flex: 1; min-width: 0; }
.namebox { width: 198px; padding: 2px 4px 0 7px; }
.dots { width: 2px; height: 10px; margin: 11px 9px; background: repeating-linear-gradient(#333 0 2px, transparent 2px 4px); }
.fx { width: 86px; padding-left: 6px; gap: 9px; }
.fx em { font: italic 400 20px/20px "Liberation Serif", serif; color: #333; }
.fx .dim { color: #999; margin-left: -4px; }
.formula { flex: 1; margin-left: 4px; padding: 0 3px 2px 12px; }

/* worksheet */
.work { display: flex; flex: 1; min-height: 0; }
.sheet { flex: 1; overflow: hidden; position: relative; }
.grid { width: 100%; table-layout: fixed; border-collapse: separate; border-spacing: 0; font: 300 14px/20px "Noto Sans CJK JP", sans-serif; font-feature-settings: normal; color: #000; }
.c-head { width: 34px; }
.c-name { width: 88px; }
.c-task { width: 128px; }
.c-rate { width: 68px; }
.c-goal { width: 127px; }
.c-free { width: 72px; }
.grid th, .grid td { padding: 0 0 2px; white-space: nowrap; position: relative; }
.grid thead th { height: 24px; padding: 0; font-weight: 300; font-size: 15px; background: #efefef; border-right: 1px solid #b8b8b8; border-bottom: 1px solid #999; color: #222; }
.grid thead th.on { background: #d2d2d2; color: #217346; border-bottom: 2px solid #217346; }
.corner::after { content: ""; position: absolute; right: 3px; bottom: 3px; border: solid transparent; border-width: 8px 7px; border-right-color: #b0b0b0; border-bottom-color: #b0b0b0; }
.grid tbody th { height: 31px; padding: 4px 0 0; font-weight: 300; font-size: 15px; background: #efefef; color: #222; border-right: 1px solid #999; border-bottom: 1px solid #c4c4c4; }
.grid tbody th.on { background: #d2d2d2; color: #217346; border-right: 2px solid #217346; border-bottom-color: #b0b0b0; }
.grid td { height: 31px; background: #fff; border-right: 1px solid #dedede; border-bottom: 1px solid #dedede; text-align: center; }
.grid td.head { background: #95dcf9; border-color: #95dcf9; border-bottom-color: #000; font-weight: 700; }
.grid td.name { text-align: left; padding-left: 2px; }
.grid td.name, .grid td.head.first { border-right-color: #000; }
.grid td.head.goal { text-align: left; padding-left: 6px; border-bottom-color: #217346; }
.grid td.num { text-align: right; padding-right: 2px; }
.grid td.goalv { background: #c7c7c7; border-bottom-color: #b0b0b0; }
.grid td.goalv.active { background: #fff; }
.bars { position: absolute; inset: 1px 1px 2px 1px; }
.bar { display: block; height: 100%; background: #006cbe; }
.active .bar { background: #008af0; }
.grid td b { position: relative; font-weight: 300; }
.selbox { position: absolute; z-index: 2; top: -2px; left: -2px; width: calc(100% + 4px); height: 313px; border: 2px solid #217346; box-shadow: inset 0 0 0 1px #fff; }
.selbox::after { content: ""; position: absolute; right: -4px; bottom: -4px; width: 7px; height: 7px; background: #217346; border: 1px solid #fff; }
.mark-o { display: inline-block; width: 13px; height: 13px; vertical-align: -2px; }
.vscroll { width: 18px; margin: 0 1px 0 3px; display: flex; flex-direction: column; align-items: center; background: #f5f5f5; border-radius: 9px; }
.up, .down { border: 5px solid transparent; }
.up { border-top: 0; border-bottom: 7px solid #6e6e6e; margin: 5px 0 26px; }
.down { border-bottom: 0; border-top: 7px solid #6e6e6e; margin: auto 0 3px; }
.thumb { width: 9px; height: 64%; border-radius: 5px; background: #6e6e6e; }

/* sheet tabs */
.sheets { display: flex; align-items: center; height: 32px; border-top: 1px solid #d6d6d6; padding-right: 19px; font-size: 15px; }
.nav { width: 33px; display: flex; justify-content: center; color: #999; }
.nav:first-child { margin-left: 14px; }
.flip { transform: rotate(180deg); }
.st { height: 18px; line-height: 16px; border-right: 1px solid #c8c8c8; width: 78px; }
.nav + .st { margin-left: 31px; padding-left: 0; }
.st.cur { position: relative; width: 77px; border-right: 1px solid #c8c8c8; }
.st.cur span { position: absolute; left: 4px; top: -8px; width: 69px; height: 28px; line-height: 27px; background: #fff; border-radius: 0 0 4px 4px; }
.st.cur span::after { content: ""; position: absolute; left: 8px; right: 8px; bottom: 3px; height: 2px; background: #107c41; }
.plus { margin-left: 41px; }
.sheets .dots { margin: 0 15px 0 auto; }
.hscroll { flex: 0 0 calc(38% + 8px); height: 17px; display: flex; align-items: center; background: #f5f5f5; border-radius: 9px; padding: 0 4px; }
.hthumb { width: 93%; height: 9px; border-radius: 5px; background: #6e6e6e; }
.left, .right { border: 5px solid transparent; }
.left { border-left: 0; border-right: 7px solid #6e6e6e; margin-right: 5px; }
.right { border-right: 0; border-left: 7px solid #6e6e6e; margin-left: auto; }

/* status bar */
.status { display: flex; align-items: center; height: 22px; border-top: 1px solid #c8c8c8; background: #f5f5f5; padding: 0 20px 2px 12px; line-height: 16px; }
.macro { margin-left: 19px; }
.stats { display: flex; gap: 19px; margin: 0 20px 0 auto; }
.view { display: flex; align-items: center; justify-content: center; width: 40px; height: 21px; }
.view.on { background: #dedede; }
.zb { width: 18px; font-size: 14px; line-height: 18px; }
.zoom { appearance: none; width: 100px; height: 16px; background: linear-gradient(#666, #666) center / 100% 1px no-repeat; }
.zoom::-webkit-slider-thumb { appearance: none; width: 5px; height: 11px; background: #555; }
.pct { margin-left: 9px; }
```
FILE: app.js
```js
const heads = ["メンバー", "業務ソフト基本", "顧客対応", "レポート", "資料作成", "会議参加"];
const rows = [
  ["山田", "10110", 60], ["佐藤", "00101", 40], ["鈴木", "11001", 60], ["田中", "11101", 80],
  ["高橋", "01110", 60], ["伊藤", "10001", 40], ["渡辺", "11111", 100], ["小林", "01001", 40],
  ["加藤", "11110", 80], ["吉田", "01101", 60],
];
const cols = "ABCDEFGHIJKLMNOPQRSTU".split("");
const circle = '<svg class="mark-o" viewBox="0 0 13 13" role="img" aria-label="○"><circle cx="6.500" cy="6.500" r="6" fill="none" stroke="#222"/></svg>';
const free = "<td></td>".repeat(14);

let html = '<colgroup><col class="c-head"><col class="c-name">' + '<col class="c-task">'.repeat(5) +
  '<col class="c-rate"><col class="c-goal">' + '<col class="c-free">'.repeat(13) + "<col></colgroup>";
html += '<thead><tr><th class="corner"></th>' +
  cols.map(c => `<th${c === "H" ? ' class="on"' : ""}>${c}</th>`).join("") + "<th></th></tr></thead><tbody>";
html += "<tr><th>2</th>" + heads.map((h, i) => `<td class="head${i ? "" : " first"}">${h}</td>`).join("") +
  '<td class="head"></td><td class="head goal">達成度</td>' + free + "</tr>";
rows.forEach(([name, marks, rate], r) => {
  html += `<tr><th class="on">${r + 3}</th><td class="name">${name}</td>`;
  // One flag per task column, B to F in order.
  html += marks.split("").map(m => `<td>${m === "1" ? circle : ""}</td>`).join("");
  html += `<td class="num">${rate}%</td><td class="num goalv${r ? "" : " active"}">` +
    `<span class="bars"><span class="bar" style="width:${rate}%"></span></span><b>${rate}%</b>` +
    (r ? "" : '<i class="selbox"></i>') + "</td>" + free + "</tr>";
});
for (let n = 13; n <= 26; n++) html += `<tr><th>${n}</th>` + "<td></td>".repeat(8) + free + "</tr>";
document.getElementById("grid-table").innerHTML = html + "</tbody>";
```
